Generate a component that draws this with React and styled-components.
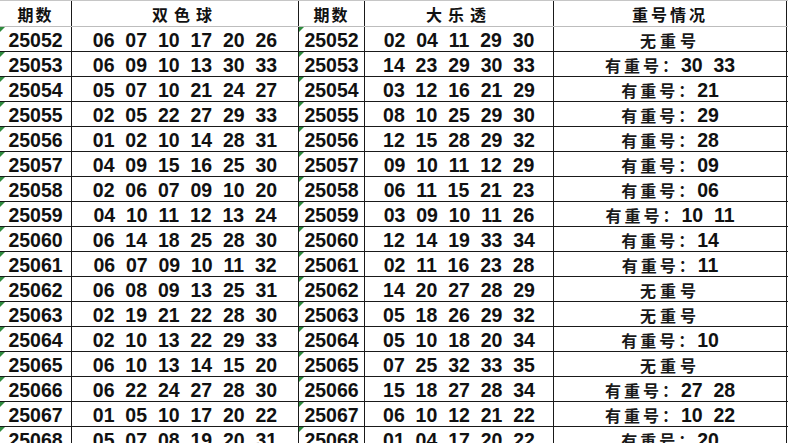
import React from "react";
import styled, { createGlobalStyle } from "styled-components";

const GlobalStyle = createGlobalStyle`
  * {
    margin: 0;
    padding: 0;
    box-sizing: border-box;
  }

  body, html {
    background-color: #ffffff;
  }
`;

const rows = [
  ["25052", "06 07 10 17 20 26", "02 04 11 29 30", []],
  ["25053", "06 09 10 13 30 33", "14 23 29 30 33", ["30", "33"]],
  ["25054", "05 07 10 21 24 27", "03 12 16 21 29", ["21"]],
  ["25055", "02 05 22 27 29 33", "08 10 25 29 30", ["29"]],
  ["25056", "01 02 10 14 28 31", "12 15 28 29 32", ["28"]],
  ["25057", "04 09 15 16 25 30", "09 10 11 12 29", ["09"]],
  ["25058", "02 06 07 09 10 20", "06 11 15 21 23", ["06"]],
  ["25059", "04 10 11 12 13 24", "03 09 10 11 26", ["10", "11"]],
  ["25060", "06 14 18 25 28 30", "12 14 19 33 34", ["14"]],
  ["25061", "06 07 09 10 11 32", "02 11 16 23 28", ["11"]],
  ["25062", "06 08 09 13 25 31", "14 20 27 28 29", []],
  ["25063", "02 19 21 22 28 30", "05 18 26 29 32", []],
  ["25064", "02 10 13 22 29 33", "05 10 18 20 34", ["10"]],
  ["25065", "06 10 13 14 15 20", "07 25 32 33 35", []],
  ["25066", "06 22 24 27 28 30", "15 18 27 28 34", ["27", "28"]],
  ["25067", "01 05 10 17 20 22", "06 10 12 21 22", ["10", "22"]],
  ["25068", "05 07 08 19 20 31", "01 04 17 20 22", ["20"]],
];

const Sheet = styled.div`
  width: 788px;
  height: 443px;
  overflow: hidden;
  background: #fff;
`;

const Row = styled.div`
  display: grid;
  grid-template-columns: 72px 227px 66px 189px 233px;
  height: ${(p) => (p.$head ? "27px" : "25px")};
  border-top: ${(p) => (p.$head ? "1px solid #c6c6c6" : "none")};
  border-bottom: 1px solid ${(p) => (p.$head ? "#bdbdbd" : "#1a1a1a")};
`;

const Cell = styled.div`
  position: relative;
  display: flex;
  align-items: center;
  justify-content: center;
  border-right: 1px solid #1a1a1a;
  color: #111;
  font-family: "Liberation Sans", Arial, sans-serif;
  font-weight: 700;
  font-size: 19.5px;
  white-space: pre;
  padding-top: 1px;

  &::before {
    content: "";
    display: ${(p) => (p.$flag ? "block" : "none")};
    position: absolute;
    left: 0;
    top: 0;
    border-top: 5px solid #2e8b3e;
    border-right: 5px solid transparent;
  }
`;

const HeadCell = styled(Cell)`
  font-family: "Noto Sans CJK SC", sans-serif;
  font-size: 16px;
  font-weight: 700;
  letter-spacing: ${(p) => p.$spread || "1px"};
  padding-top: 0;
`;

const Han = styled.span`
  font-family: "Noto Sans CJK SC", sans-serif;
  font-size: 16px;
  font-weight: 700;
  letter-spacing: ${(p) => p.$spread || "3px"};
  color: #1a1a1a;
`;

const spaced = (s) => s.split(" ").join("  ");

const Repeat = ({ nums }) =>
  nums.length === 0 ? (
    <Han $spread="4px">无重号</Han>
  ) : (
    <>
      <Han>有重号：</Han>
      {nums.join("  ")}
    </>
  );

export default function App() {
  return (
    <>
      <GlobalStyle />
      <Sheet>
        <Row $head>
          <HeadCell $spread="2px">期数</HeadCell>
          <HeadCell $spread="6px">双色球</HeadCell>
          <HeadCell $spread="2px">期数</HeadCell>
          <HeadCell $spread="6px">大乐透</HeadCell>
          <HeadCell $spread="3px">重号情况</HeadCell>
        </Row>
        {rows.map(([id, ssq, dlt, rep]) => (
          <Row key={id}>
            <Cell $flag>{id}</Cell>
            <Cell>{spaced(ssq)}</Cell>
            <Cell $flag>{id}</Cell>
            <Cell>{spaced(dlt)}</Cell>
            <Cell>
              <Repeat nums={rep} />
            </Cell>
          </Row>
        ))}
      </Sheet>
    </>
  );
}
